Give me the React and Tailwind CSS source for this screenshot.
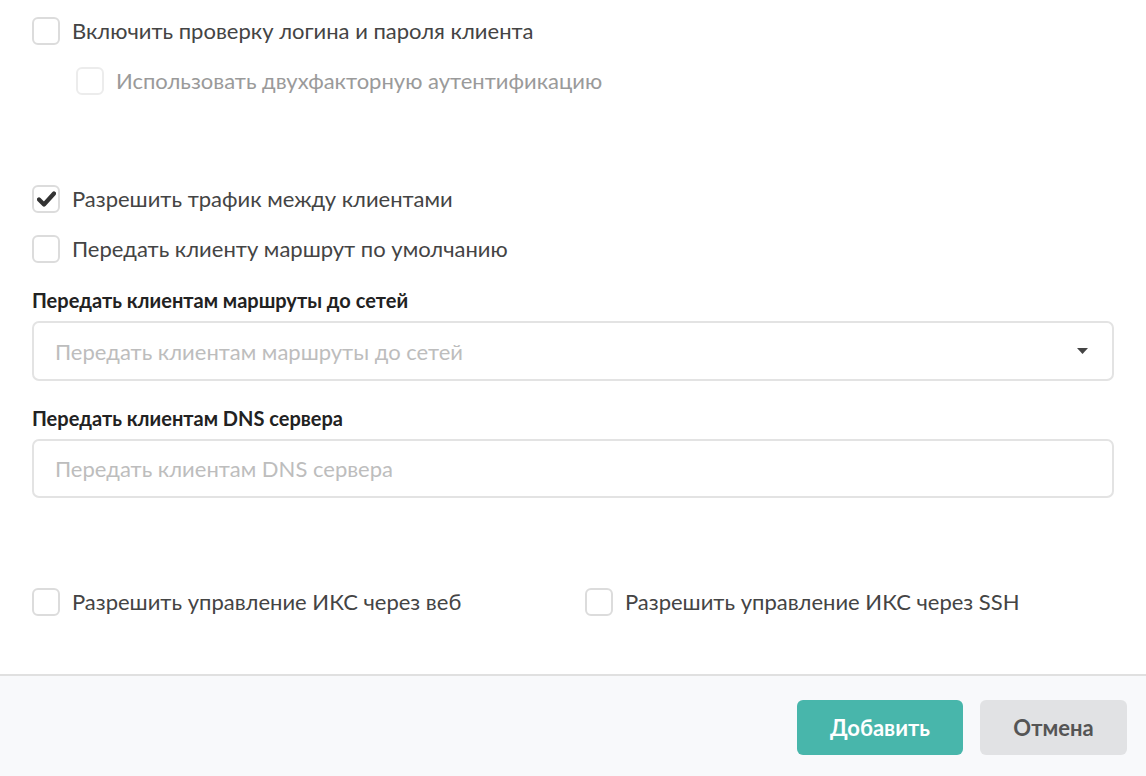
import React, { useState } from 'react';

function Checkbox({ checked, disabled, label, onChange }) {
  return (
    <label className="flex items-center h-[28px] cursor-pointer select-none">
      <span
        onClick={onChange}
        className={`w-[28px] h-[28px] rounded-[6px] border-2 flex items-center justify-center bg-white shrink-0 ${
          disabled ? 'border-[#ececec]' : 'border-[#dcdcdc]'
        }`}
      >
        {checked && (
          <svg width="19" height="16" viewBox="0 0 19 16">
            <path d="M2 8.5 L7 13.5 L17 2.5" fill="none" stroke="#333" strokeWidth="4.2" strokeLinecap="round" strokeLinejoin="round" />
          </svg>
        )}
      </span>
      <span className={`ml-[12px] text-[22px] leading-none ${disabled ? 'text-[#9a9a9a]' : 'text-[#444]'}`}>
        {label}
      </span>
    </label>
  );
}

export default function App() {
  const [auth, setAuth] = useState(false);
  const [traffic, setTraffic] = useState(true);
  const [route, setRoute] = useState(false);
  const [web, setWeb] = useState(false);
  const [ssh, setSsh] = useState(false);

  return (
    <div className="w-[1146px] h-[776px] bg-white flex flex-col" style={{ fontFamily: 'Lato, "Open Sans", sans-serif' }}>
      <div className="flex-1 px-[32px] pt-[17px] flex flex-col">
        <Checkbox checked={auth} onChange={() => setAuth(a => !a)} label="Включить проверку логина и пароля клиента" />
        <div className="mt-[22px] pl-[44px]">
          <Checkbox disabled label="Использовать двухфакторную аутентификацию" />
        </div>

        <div className="mt-[90px]">
          <Checkbox checked={traffic} onChange={() => setTraffic(t => !t)} label="Разрешить трафик между клиентами" />
        </div>
        <div className="mt-[22px]">
          <Checkbox checked={route} onChange={() => setRoute(r => !r)} label="Передать клиенту маршрут по умолчанию" />
        </div>

        <div className="mt-[25px] text-[20px] leading-[24px] font-bold text-[#222]">
          Передать клиентам маршруты до сетей
        </div>
        <div className="mt-[9px] h-[60px] border-2 border-[#e3e3e3] rounded-[7px] flex items-center justify-between pl-[21px] pr-[24px]">
          <span className="text-[22px] text-[#bdbdbd]">Передать клиентам маршруты до сетей</span>
          <svg width="11" height="6" viewBox="0 0 11 6">
            <path d="M0 0 H11 L5.5 6 Z" fill="#444" />
          </svg>
        </div>

        <div className="mt-[25px] text-[20px] leading-[24px] font-bold text-[#222]">
          Передать клиентам DNS сервера
        </div>
        <input
          className="mt-[9px] h-[59px] border-2 border-[#e3e3e3] rounded-[7px] px-[21px] text-[22px] text-[#444] placeholder:text-[#bdbdbd] outline-none"
          placeholder="Передать клиентам DNS сервера"
        />

        <div className="mt-[90px] flex">
          <div className="w-[553px]">
            <Checkbox checked={web} onChange={() => setWeb(w => !w)} label="Разрешить управление ИКС через веб" />
          </div>
          <Checkbox checked={ssh} onChange={() => setSsh(s => !s)} label="Разрешить управление ИКС через SSH" />
        </div>
      </div>

      <div className="h-[102px] border-t-2 border-[#e0e0e0] bg-[#f8f9fb] flex justify-end items-start pt-[24px] pr-[19px] gap-[17px]">
        <button className="w-[166px] h-[55px] rounded-[6px] bg-[#48b6ab] text-white text-[22px] font-bold">
          Добавить
        </button>
        <button className="w-[147px] h-[55px] rounded-[6px] bg-[#e1e2e4] text-[#555] text-[22px] font-bold">
          Отмена
        </button>
      </div>
    </div>
  );
}
